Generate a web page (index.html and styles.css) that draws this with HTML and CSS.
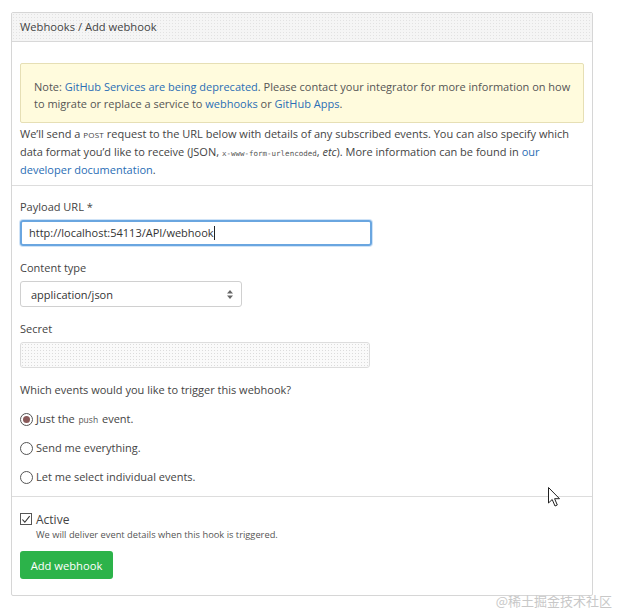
FILE: index.html
```html
<!DOCTYPE html>
<html>
<head>
<meta charset="utf-8">
<link rel="stylesheet" href="styles.css">
</head>
<body>
<div class="box">
  <div class="box-header">Webhooks / Add webhook</div>
  <div class="box-intro">
    <div class="flash">Note: <a href="#">GitHub Services are being deprecated</a>. Please contact your integrator for more information on how to migrate or replace a service to <a href="#">webhooks</a> or <a href="#">GitHub Apps</a>.</div>
    <p class="intro">We’ll send a <span class="smallcaps">post</span> request to the URL below with details of any subscribed events. You can also specify which data format you’d like to receive (JSON, <code>x-www-form-urlencoded</code>, <em>etc</em>). More information can be found in <a href="#">our developer documentation</a>.</p>
  </div>
  <div class="box-form">
    <div class="field">
      <label class="lbl">Payload URL *</label>
      <div class="input input-focus">http://localhost:54113/API/webhook<span class="caret"></span></div>
    </div>
    <div class="field">
      <label class="lbl">Content type</label>
      <div class="select">application/json
        <svg class="updown" width="6" height="9" viewBox="0 0 6 9"><path d="M3 0L6 3.5H0Z M3 9L0 5.5H6Z" fill="#666"/></svg>
      </div>
    </div>
    <div class="field">
      <label class="lbl">Secret</label>
      <div class="input input-secret"></div>
    </div>
    <div class="question">Which events would you like to trigger this webhook?</div>
    <div class="radios">
      <div class="radio"><span class="circle checked"></span><span class="radio-text">Just the <code class="push">push</code> event.</span></div>
      <div class="radio"><span class="circle"></span><span class="radio-text">Send me everything.</span></div>
      <div class="radio"><span class="circle"></span><span class="radio-text">Let me select individual events.</span></div>
    </div>
  </div>
  <div class="box-footer">
    <div class="check-row">
      <span class="checkbox"><svg width="11" height="11" viewBox="0 0 11 11"><path d="M1.5 5.5L4.2 8.5L9.5 1.8" fill="none" stroke="#333" stroke-width="1.2"/></svg></span>
      <span class="check-label">Active</span>
    </div>
    <div class="note">We will deliver event details when this hook is triggered.</div>
    <button class="btn">Add webhook</button>
  </div>
</div>
<svg class="cursor" width="14" height="21" viewBox="0 0 14 21"><path d="M0.5 0.5V16L4.2 12.5L7 19L9.3 18L6.6 11.7H11.5Z" fill="#fff" stroke="#222" stroke-width="1"/></svg>
<div class="watermark">@稀土掘金技术社区</div>
</body>
</html>
```
FILE: styles.css
```css
html, body {
  margin: 0;
  padding: 0;
  background: #fff;
}
body {
  font-family: "Open Sans", "Noto Sans", sans-serif;
  font-size: 11px;
  color: #444;
  width: 617px;
  height: 612px;
  position: relative;
  overflow: hidden;
}
a {
  color: #2a6db5;
  text-decoration: none;
}
.box {
  margin: 12px 0 0 11px;
  width: 580px;
  height: 582px;
  border: 1px solid #d6d6d6;
  border-radius: 2px;
  display: flex;
  flex-direction: column;
}
.box-header {
  height: 28px;
  line-height: 28px;
  padding-left: 8px;
  background-color: #f5f5f5;
  background-image: radial-gradient(#e2e2e2 0.6px, transparent 0.7px);
  background-size: 3px 3px;
  border-bottom: 1px solid #d8d8d8;
  color: #444;
  font-size: 11.2px;
}
.box-intro {
  padding: 21px 8px 6px 8px;
  border-bottom: 1px solid #ddd;
}
.flash {
  background: #fffbdd;
  border: 1px solid #e6dfb5;
  border-radius: 2px;
  padding: 14px 12px 10px 13px;
  line-height: 17px;
  color: #555;
}
.intro {
  margin: 2px 0 0;
  line-height: 18px;
  color: #444;
}
.smallcaps {
  font-size: 8px;
  text-transform: uppercase;
  letter-spacing: 0.2px;
  line-height: 1;
}
code {
  font-family: "DejaVu Sans Mono", monospace;
  font-size: 7.5px;
  color: #555;
  line-height: 1;
}
.box-form {
  padding: 13px 8px 11px 8px;
  border-bottom: 1px solid #ddd;
}
.field {
  margin-bottom: 14px;
}
.lbl {
  display: block;
  line-height: 16px;
  margin-bottom: 5px;
  color: #444;
}
.input {
  width: 350px;
  height: 24px;
  box-sizing: border-box;
  border: 1px solid #ccc;
  border-radius: 3px;
  line-height: 22px;
  padding-left: 8px;
  color: #333;
  display: flex;
  align-items: center;
}
.input-focus {
  border: 2px solid #6aa6e0;
  box-shadow: 0 0 0 1px #cfe3f7;
  height: 26px;
  width: 352px;
  padding-left: 7px;
}
.caret {
  display: inline-block;
  width: 1px;
  height: 14px;
  background: #222;
}
.input-secret {
  height: 26px;
  background-color: #fafafa;
  background-image: radial-gradient(#dcdcdc 0.6px, transparent 0.7px);
  background-size: 3px 3px;
  border-color: #ddd;
}
.select {
  width: 222px;
  height: 26px;
  box-sizing: border-box;
  border: 1px solid #d0d0d0;
  border-radius: 3px;
  padding: 0 8px 0 10px;
  display: flex;
  align-items: center;
  justify-content: space-between;
  color: #333;
  background: #fff;
}
.question {
  margin-top: 6px;
  line-height: 16px;
  color: #444;
}
.radios {
  margin-top: 13px;
  display: flex;
  flex-direction: column;
  gap: 13px;
}
.radio {
  display: flex;
  align-items: center;
  height: 16px;
  color: #444;
}
.radio-text {
  line-height: 16px;
}
.circle {
  width: 11px;
  height: 11px;
  border: 1px solid #555;
  border-radius: 50%;
  margin-right: 3px;
  box-sizing: content-box;
  position: relative;
  background: #fff;
}
.circle.checked::after {
  content: "";
  position: absolute;
  left: 2px;
  top: 2px;
  width: 7px;
  height: 7px;
  border-radius: 50%;
  background: #8a5a5a;
}
.radio .push {
  font-family: "Open Sans", sans-serif;
  font-size: 8.5px;
  margin: 0 1px;
  color: #555;
}
.box-footer {
  padding: 15px 8px 0 8px;
}
.check-row {
  display: flex;
  align-items: center;
  height: 14px;
}
.checkbox {
  width: 12px;
  height: 12px;
  border: 1px solid #555;
  box-sizing: border-box;
  margin-right: 4px;
  display: flex;
  align-items: center;
  justify-content: center;
}
.checkbox svg { display: block; }
.check-label {
  font-size: 12px;
  color: #444;
}
.note {
  margin: 2px 0 0 16px;
  font-size: 9.3px;
  color: #555;
  line-height: 14px;
}
.btn {
  margin-top: 9px;
  width: 93px;
  height: 28px;
  border: none;
  border-radius: 3px;
  background: #2cb34a;
  color: #fff;
  font-family: "Open Sans", sans-serif;
  font-size: 11.2px;
  padding: 0;
}
.cursor {
  position: absolute;
  left: 548px;
  top: 487px;
}
.watermark {
  position: absolute;
  right: 5px;
  top: 591px;
  font-family: "Noto Sans CJK SC", sans-serif;
  font-size: 13px;
  color: #c8c8c8;
}
```
